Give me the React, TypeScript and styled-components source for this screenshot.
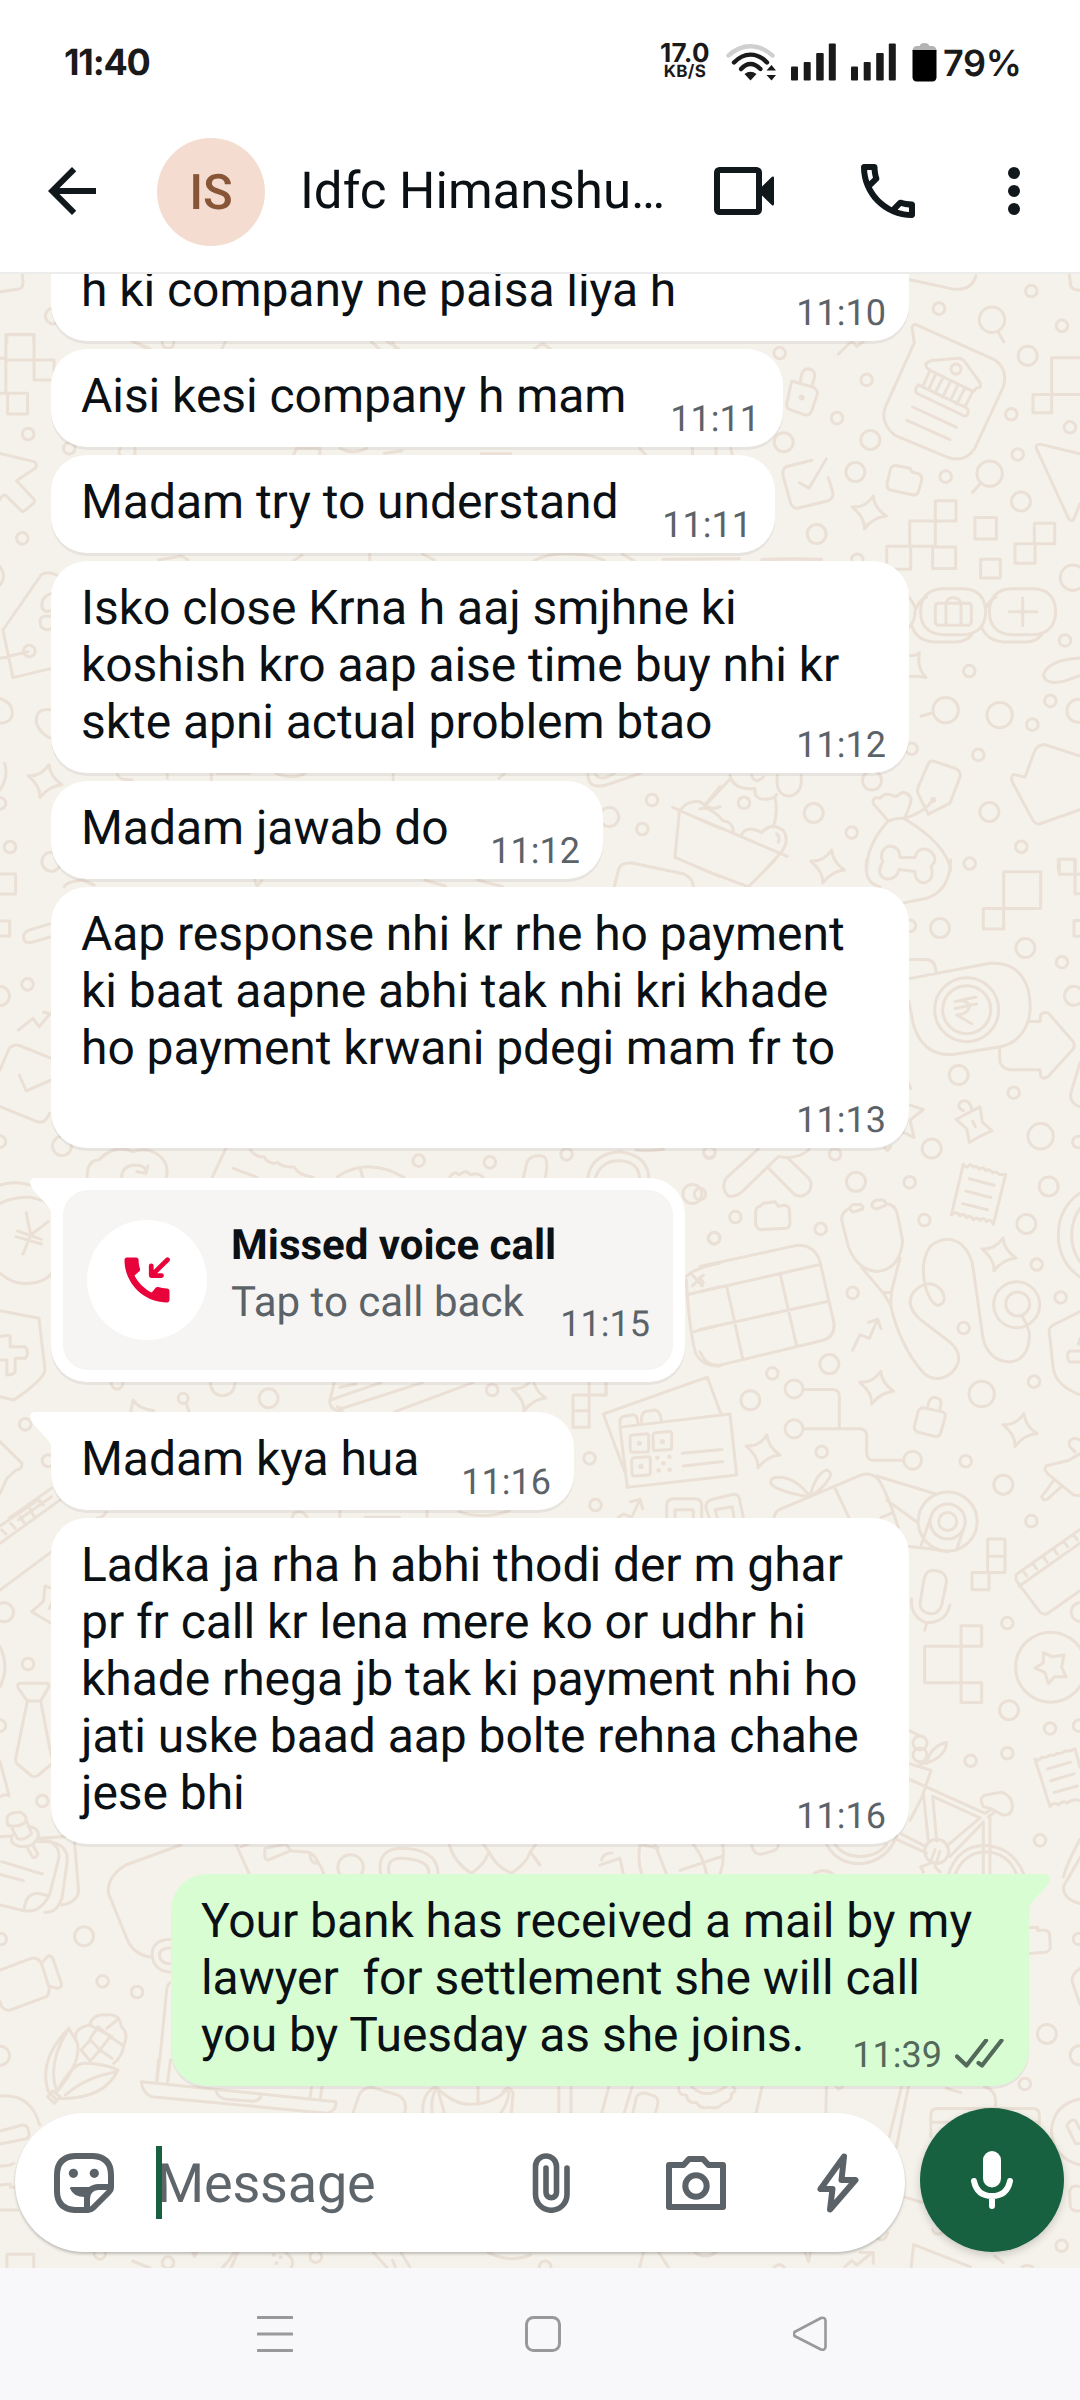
import React from 'react';
import styled, { createGlobalStyle } from 'styled-components';

const GlobalStyle = createGlobalStyle`
  * { box-sizing: border-box; }
  body { margin: 0; background: #fff; font-family: Roboto, "Noto Sans", sans-serif; }
  svg { display: block; flex: none; }
`;

const Screen = styled.div`
  width: 1080px;
  height: 2400px;
  display: flex;
  flex-direction: column;
  overflow: hidden;
  text-rendering: geometricPrecision;
`;

/* ---------- status bar ---------- */

const StatusBar = styled.header`
  height: 110px;
  flex: none;
  display: flex;
  align-items: center;
  padding: 14px 59px 0 64px;
  font-family: Inter, Roboto, sans-serif;
  color: #1a1a1a;
`;

const Clock = styled.span`
  font-size: 36px;
  font-weight: 650;
  line-height: 40px;
  letter-spacing: -1.2px;
  margin-right: auto;
`;

const NetSpeed = styled.div`
  width: 52px;
  display: flex;
  flex-direction: column;
  align-items: center;
  margin-right: 15px;
  white-space: nowrap;
`;

const SpeedValue = styled.span`
  font-size: 26px;
  font-weight: 700;
  line-height: 21px;
  letter-spacing: 0.4px;
`;

const SpeedUnit = styled.span`
  font-size: 17px;
  font-weight: 700;
  line-height: 17px;
  letter-spacing: 0.3px;
`;

const Battery = styled.span`
  font-size: 36px;
  font-weight: 600;
  line-height: 40px;
  letter-spacing: -0.3px;
  width: 77px;
  margin-left: 6px;
  margin-right: 1px;
  padding-top: 2px;
  white-space: nowrap;
`;

/* ---------- app bar ---------- */

const AppBar = styled.div`
  height: 164px;
  flex: none;
  display: flex;
  align-items: center;
  padding: 0 30px 0 36px;
  border-bottom: 2px solid #ececec;
  background: #fff;
  color: #10181c;
`;

const Avatar = styled.div`
  width: 108px;
  height: 108px;
  margin: 2px 35px 0 49px;
  border-radius: 50%;
  background: #f4ddd0;
  color: #885637;
  font-size: 49px;
  font-weight: 500;
  display: flex;
  align-items: center;
  justify-content: center;
  flex: none;
`;

const ContactName = styled.h1`
  flex: 1;
  margin: 0;
  padding-top: 2px;
  font-size: 51px;
  font-weight: 400;
  line-height: 60px;
  color: #0a1014;
  white-space: nowrap;
`;

const HeaderIcon = styled.svg<{ $gap?: number }>`
  margin-right: ${(p) => p.$gap ?? 0}px;
`;

/* ---------- chat ---------- */

const Chat = styled.main`
  position: relative;
  flex: 1;
  min-height: 0;
  display: flex;
  flex-direction: column;
  background: #f5f2eb;
  overflow: hidden;
`;

const Backdrop = styled.svg`
  position: absolute;
  inset: 0;
`;

const Messages = styled.div`
  position: relative;
  flex: 1;
  min-height: 0;
  display: flex;
  flex-direction: column;
  justify-content: flex-end;
  align-items: flex-start;
  padding: 0 51px 22px;
  overflow: hidden;
`;

type BubbleProps = { $w: number; $out?: boolean; $first?: boolean; $clipped?: boolean; $card?: boolean; $roomy?: boolean };

const Bubble = styled.article<BubbleProps>`
  position: relative;
  flex: none;
  display: grid;
  width: ${(p) => p.$w}px;
  margin-top: ${(p) => (p.$first ? 30 : 8)}px;
  align-self: ${(p) => (p.$out ? 'flex-end' : 'flex-start')};
  padding: ${(p) => (p.$card ? '12px' : p.$roomy ? '18px 23px 72px 30px' : '18px 23px 23px 30px')};
  border-radius: ${(p) =>
    p.$clipped ? '0 0 36px 36px' : p.$first ? (p.$out ? '36px 0 36px 36px' : '0 36px 36px 36px') : '36px'};
  background: ${(p) => (p.$out ? '#d8fdd2' : '#fff')};
  box-shadow: 0 3px 0 rgba(11, 20, 26, 0.06);
`;

const Tail = styled.svg<{ $out?: boolean }>`
  position: absolute;
  top: 0;
  ${(p) => (p.$out ? 'right: -21px; transform: scaleX(-1);' : 'left: -21px;')}
  fill: ${(p) => (p.$out ? '#d8fdd2' : '#fff')};
`;

const MessageText = styled.div`
  grid-area: 1 / 1;
  justify-self: start;
  font-size: 48px;
  line-height: 57px;
  letter-spacing: -0.05px;
  color: #0a1014;
  white-space: pre;
`;

const Line = styled.span`
  display: block;
  width: fit-content;
`;

const Meta = styled.div<{ $out?: boolean; $roomy?: boolean }>`
  grid-area: 1 / 1;
  align-self: end;
  justify-self: end;
  display: flex;
  align-items: center;
  gap: 13px;
  height: 36px;
  margin-bottom: ${(p) => (p.$roomy ? -62 : p.$out ? -10 : -13)}px;
  margin-right: ${(p) => (p.$out ? 2 : 0)}px;
  font-size: 36px;
  line-height: 36px;
  color: ${(p) => (p.$out ? '#53695a' : '#5b6368')};
`;

const CallCard = styled.div`
  height: 180px;
  border-radius: 25px;
  background: #f6f5f4;
  display: flex;
  align-items: center;
  padding: 0 23px 0 24px;
`;

const CallBadge = styled.div`
  width: 120px;
  height: 120px;
  border-radius: 50%;
  background: #fff;
  display: flex;
  align-items: center;
  justify-content: center;
  margin-right: 24px;
`;

const CallText = styled.div`
  flex: 1;
  display: flex;
  flex-direction: column;
  padding-bottom: 12px;
  white-space: nowrap;
  font-size: 42px;
  line-height: 57px;
  color: #5b6368;
`;

const CallTitle = styled.strong`
  font-weight: 700;
  color: #0a1014;
`;

const CallTime = styled.span`
  align-self: flex-end;
  margin-bottom: 28px;
  font-size: 36px;
  line-height: 36px;
  color: #5b6368;
`;

/* ---------- composer ---------- */

const Composer = styled.footer`
  position: relative;
  flex: none;
  display: flex;
  align-items: flex-end;
  gap: 15px;
  padding: 0 16px 16px 15px;
`;

const InputPill = styled.div`
  width: 890px;
  height: 139px;
  border-radius: 70px;
  background: #fff;
  box-shadow: 0 2px 3px rgba(0, 0, 0, 0.22);
  display: flex;
  align-items: center;
  padding: 0 46px 0 39px;
  color: #5b6368;
`;

const Placeholder = styled.div`
  position: relative;
  flex: 1;
  height: 73px;
  margin-left: 42px;
  padding-left: 1px;
  font-size: 54px;
  line-height: 78px;
  letter-spacing: -0.2px;
  color: #5e666b;
`;

const Caret = styled.span`
  position: absolute;
  left: 0;
  top: 0;
  width: 6px;
  height: 73px;
  background: #176040;
`;

const InputIcon = styled.svg<{ $gap?: number }>`
  margin-left: ${(p) => p.$gap ?? 0}px;
`;

const MicButton = styled.button`
  width: 144px;
  height: 144px;
  border: 0;
  padding: 0;
  border-radius: 50%;
  background: #176040;
  box-shadow: 0 3px 8px rgba(0, 0, 0, 0.18);
  display: flex;
  align-items: center;
  justify-content: center;
`;

const NavBar = styled.nav`
  height: 132px;
  flex: none;
  display: flex;
  align-items: center;
  gap: 232px;
  padding-left: 257px;
  background: #f8f8fb;
`;

/* ---------- wallpaper ---------- */

type Dot = [number, number, number?];
type PatchData = { x: number; y: number; sx: number; sy: number; d: string; dots?: Dot[]; sparks?: Dot[]; specks?: Dot[] };

const PATCHES: PatchData[] = [
  {
    x: 0, y: 0, sx: 2.904, sy: 3,
    d: 'M65 825L67 850Q65 868 50 868L0 875M20 1025V1003H98V1025M385 1025L435 1045M1078 1025L1100 1045M1140 1025L1148 1042M645 1045L655 1025',
    dots: [[155, 948, 8], [488, 1028]],
  },
  {
    x: 700, y: 270, sx: 3, sy: 2.613,
    d: 'M648 143L885 235Q925 260 910 305L825 465Q795 505 745 490L585 432Q540 400 555 360L643 190L636 150Q640 140 648 143Z M678 245Q690 235 705 236L765 231Q785 228 795 240L838 292Q848 310 830 308L820 318L690 262Q675 255 678 245M690 262L668 305M708 270L685 313M730 280L705 322M752 290L728 332M774 300L752 340M796 306L770 350M820 315L795 357M655 300L800 360Q808 368 802 378Q795 385 785 378L650 322Q642 310 655 300ZM638 358L770 411M621 393L750 443M275 290L338 306Q355 312 352 325L335 368Q328 382 312 378L268 364Q255 358 262 342ZM302 290Q303 258 325 258Q350 262 342 285L336 303M893 160L912 188M843 556L818 581M698 1157L663 1166M1140 229H1055V325H1140M1055 325V373H999V325H1055M335 497L258 514Q245 520 250 540L272 610Q280 625 295 622L385 603Q402 595 398 580L385 543M298 556L327 570L379 493M572 518Q580 508 595 512L630 518L636 528L655 532Q668 538 665 550L655 580Q650 590 640 588L570 575Q558 570 562 555ZM706 603H768V656H706ZM629 656H706V722H629ZM560 722H632V782H560ZM698 724H767V780H698ZM825 647H889V703H825ZM1003 662H1064V715H1003ZM945 715H1005V766H945ZM842 756H901V805H842ZM1140 480L1020 455Q1005 455 1010 468L1105 648Q1115 662 1123 648L1140 610M730 833H790Q855 835 857 893Q855 950 790 953H730Q662 950 662 893Q662 835 730 833ZM715 871H805Q814 871 814 880V918Q814 928 805 928H715Q706 928 706 918V880Q706 871 715 871ZM738 928V875Q740 856 760 856Q782 858 783 875V928M627 855Q650 880 645 893Q645 920 627 933M637 933Q650 968 700 972H770Q800 970 815 953M680 855Q660 860 648 885M935 833H1000Q1065 835 1067 893Q1065 950 1000 953H935Q870 950 868 893Q870 835 935 833ZM968 857V929M928 893H1010M845 933Q860 968 910 972H980Q1010 970 1025 953M888 855Q865 865 857 885M1140 1014Q1040 1020 1030 1060Q1040 1085 1090 1075L1140 1060M627 1008Q650 1008 658 1000Q650 1040 678 1065Q650 1060 627 1062M702 1284L765 1302Q785 1310 780 1325L750 1393L685 1422L655 1370Q650 1360 655 1350L685 1290Q690 1280 702 1284ZM700 1384Q670 1420 612 1433M565 1440L520 1395Q515 1375 540 1380Q555 1365 575 1372Q590 1380 600 1368Q620 1360 633 1380Q635 1395 612 1433Q590 1430 565 1440Q500 1500 500 1568M612 1433Q740 1500 752 1568M600 1535H645Q650 1510 680 1513Q710 1525 703 1548M600 1535Q600 1505 565 1505Q535 1520 548 1545M15 1400L90 1330M220 1455Q235 1420 225 1378M90 1320Q100 1360 165 1355Q160 1385 200 1383Q225 1380 230 1370M155 1320Q165 1345 190 1325M232 1320Q225 1370 265 1375Q310 1370 303 1320M0 1408Q30 1400 70 1440Q95 1440 100 1465M125 1475Q140 1450 185 1470Q215 1440 250 1465Q270 1490 245 1520M0 1435L262 1532M195 1568L245 1520M230 1473Q242 1482 235 1495M1140 1270L1035 1240Q1015 1240 1005 1255L975 1325L940 1318Q930 1325 938 1340L1000 1440Q1010 1450 1020 1447L1140 1410M415 220L455 186L470 200L490 187M627 25L760 50Q815 55 828 15M1108 12L1112 40Q1115 53 1140 53M185 757Q280 752 365 757M1075 1568V1540H1125V1568',
    dots: [[994, 55], [717, 101], [1086, 146], [500, 287], [411, 387], [934, 377], [1110, 411], [953, 482], [239, 217], [737, 540], [472, 757], [1095, 968], [808, 1048], [1051, 1126], [997, 1188], [635, 1251], [835, 1267], [132, 1392], [455, 1470], [964, 1507], [809, 1551], [768, 259, 5], [983, 224, 9.5], [511, 444, 9.5], [466, 528, 9.5], [963, 605, 9.5], [350, 690, 9.5], [251, 450, 9.5], [516, 1334, 9.5], [341, 1419, 9.5], [868, 1416, 9.5], [876, 130, 12.7], [869, 532, 12.7], [1119, 804, 12.7], [737, 1150, 12.7], [899, 1163, 12.7], [1135, 1152, 11.5]],
    sparks: [[508, 635], [383, 1560]],
    specks: [[305, 333, 3], [700, 1384, 3]],
  },
  {
    x: 700, y: 860, sx: 3, sy: 2.613,
    d: 'M500 0Q490 60 540 70M752 0Q750 80 680 100L610 112M548 5Q525 40 560 50Q590 50 597 25L645 30Q645 60 675 60Q705 50 693 18L703 5M911 31H1022V127H911ZM850 127H911V180H850ZM1078 0V37H1125V88H1140M1125 0V37H1140M1140 158H1122V199H1140M0 22L145 70L225 0M627 310L870 270Q960 265 985 340Q1000 400 975 440Q950 480 900 488L760 508Q670 515 640 430L627 370M627 260H680Q708 262 708 295M765 370L828 358M765 388L830 376M780 368Q810 370 808 385Q800 405 770 405L815 428M988 422H1020L1022 405Q1030 395 1045 400L1120 475Q1125 485 1120 493L1045 565Q1030 575 1022 565L1020 548H930Q900 545 899 520V490M768 678L800 663L840 645L847 685L876 707L840 722L808 738L800 702ZM790 655Q765 645 785 630Q810 625 815 652M818 683L826 697M627 640L670 652L630 680L642 725L610 712M555 753L562 760L572 750M627 585L632 597M790 795Q797 806 805 800Q812 792 820 803Q830 797 838 808Q848 800 858 812Q868 805 878 817Q888 812 898 822L917 822L880 952Q870 935 860 945Q850 930 840 942Q830 930 820 940Q810 925 800 935Q790 920 780 930Q770 915 754 927ZM808 833L882 850M798 865L872 882M788 898L862 914M175 755L80 830Q60 855 85 878Q105 882 125 868L235 775L262 778Q310 775 328 755M205 805L285 875Q310 885 328 865Q340 845 325 830L262 778M180 905L190 897L225 893L235 905L255 902Q268 905 268 915L270 950Q268 962 258 962L180 966Q167 960 167 950V920Q168 907 180 905ZM0 1062L290 1007Q345 1005 360 1050L402 1210Q405 1245 370 1255L60 1320Q20 1325 0 1285M0 1128L360 1057M0 1227L385 1153M80 1113L128 1303M240 1080L290 1270M0 1090L10 1105M447 910Q420 925 426 945L445 1010Q470 1070 530 1075Q600 1070 608 995L592 925Q585 900 560 898M460 900L480 900Q492 905 488 912L460 920Q445 915 452 905ZM525 890L548 888Q560 893 555 903L530 912Q512 910 517 897ZM485 1065L553 1135L572 1165Q600 1270 670 1340Q710 1370 755 1340Q800 1300 750 1260L660 1200Q610 1160 645 1125Q690 1090 725 1125Q745 1155 715 1164Q690 1160 675 1110Q660 1050 690 1010Q740 975 785 1005Q815 1030 820 1070L850 1255Q870 1310 930 1312Q990 1305 988 1235Q980 1210 965 1190M600 1040L575 1125L572 1165M553 1130H575M458 1281L480 1240L508 1250L533 1200M505 1208L533 1200L543 1225M1140 870Q1075 910 1075 980Q1075 1050 1140 1090M1140 910Q1115 940 1115 980Q1115 1020 1140 1050M1140 530L1112 610Q1108 635 1140 645M1140 1180L1060 1215Q1045 1222 1048 1235L1060 1330Q1070 1375 1140 1397M1140 1283H1110Q1103 1285 1103 1297Q1103 1312 1112 1312H1140M1140 1250L1135 1265',
    dots: [[1086, 267], [941, 608], [629, 842], [405, 769], [28, 765], [106, 933], [43, 988], [362, 964], [673, 941], [458, 1131], [1010, 1057], [1082, 1143], [791, 1223], [1135, 737], [630, 172], [0, 873], [720, 178, 9.5], [976, 230, 9.5], [776, 562, 9.5], [695, 754, 9.5], [468, 841, 9.5], [1046, 853, 9.5], [979, 951, 9.5], [1022, 722, 12.7], [1122, 355, 9.5], [800, 391, 32], [800, 391, 24], [950, 1162, 23], [953, 1160, 12]],
    sparks: [[897, 1032]],
  },
  {
    x: 600, y: 1340, sx: 3, sy: 2.904,
    d: 'M611 144H700Q718 145 718 165V258M611 258H780Q800 260 800 278V330Q803 350 820 349H909M965 196L1025 208Q1038 212 1036 222L1022 270Q1018 282 1005 280L955 268Q940 262 943 250L955 205ZM983 197Q985 168 1003 166Q1028 170 1022 190L1018 207M75 385L10 215L322 108L362 213M60 253L390 215L410 392L82 428ZM60 245Q58 225 70 222L100 217Q112 218 114 242M125 238Q122 215 135 208L165 203Q180 205 184 232M98 276L140 272Q146 272 146 278V318Q146 325 140 325L98 326Q91 326 91 320L90 282Q90 276 98 276ZM166 269L208 266Q215 266 215 272V312Q215 318 209 318L168 321Q160 321 160 314L159 275Q160 270 166 269ZM102 342L144 339Q151 339 151 345V385Q151 392 145 392L104 395Q97 395 96 388L95 348Q96 343 102 342ZM247 329L366 318M250 366L369 353M200 516V480Q200 462 220 461H285Q305 463 305 480V516M225 516V493H280V516M328 516L318 490Q315 470 335 463L400 448Q415 448 418 460L430 516M352 516L345 493L397 484L402 516M55 515L70 505L95 515L120 462M92 470L120 462L128 490M522 516Q525 495 545 490L775 395Q810 380 835 405Q860 440 895 545M705 430L747 516M830 395L1010 448M860 465L953 530M630 455Q580 390 520 400Q500 415 530 430Q580 450 630 455Q645 390 680 377Q700 385 685 405Q670 430 630 455M843 516L875 503M990 520L962 600M1090 550L1070 610M1045 615Q990 605 927 600M1440 330L1405 350L1340 365Q1328 375 1345 390L1420 450L1440 452M1410 310Q1400 290 1425 285L1440 290M1360 410L1325 455Q1330 470 1345 460L1385 425M1410 310L1425 325M1163 578H1215V675H1163ZM1163 628H1215M1116 675H1167V725H1116ZM1083 830H1145V889H1083ZM1083 889V995M974 889H1083M974 889V995H1145V1053H1083V995M1440 550L1250 680Q1245 690 1250 700L1320 790Q1332 800 1345 793L1440 728M1257 715L1440 590M1270 672L1280 685M1300 650L1310 665M1330 630L1341 645M1362 608L1372 622M1392 586L1403 600M1420 566L1432 580M985 672Q1005 665 1025 675Q1043 685 1038 710L1025 770Q1015 797 990 795Q960 790 960 765L972 695Q975 680 985 672ZM935 752Q930 800 975 820Q1035 825 1050 770M980 822L974 843M1330 908L1357 920L1392 915L1385 950L1398 978L1363 978L1345 998L1335 965L1305 953L1330 937ZM1305 1217Q1315 1225 1325 1212Q1340 1215 1350 1205Q1362 1210 1372 1200Q1385 1203 1395 1193Q1408 1197 1425 1187L1440 1240M1305 1217L1350 1355Q1362 1340 1375 1350Q1390 1335 1402 1345Q1420 1330 1440 1338M1342 1246L1412 1226M1352 1280L1422 1260M1362 1314L1432 1295M927 1275L1155 1375M970 1315L985 1455M998 1325L1010 1455M998 1325L1140 1388L1040 1470M1155 1375L1175 1362M1165 1385L1185 1370M1150 1355Q1135 1330 1155 1322L1205 1313Q1240 1325 1237 1360Q1230 1385 1205 1378L1175 1362L1150 1355M1150 1400V1550M1170 1385V1550M1150 1400L1050 1500M890 1450L980 1490M905 1435L975 1470M1045 1552Q1075 1465 1160 1468Q1240 1475 1272 1552M1065 1552Q1095 1485 1160 1487Q1225 1490 1250 1552M680 1465Q710 1520 780 1521Q860 1515 890 1440M705 1465Q730 1500 780 1500Q830 1500 860 1465M927 1230L993 1250L965 1330L930 1395M980 1230Q990 1180 1040 1168Q1035 1220 960 1232M930 1135L960 1150M1005 1480L990 1520L962 1530L970 1545M1020 1485L1005 1530L1020 1545M120 1465Q112 1510 125 1552M368 1465Q375 1510 360 1552M165 1465L200 1552M280 1465Q310 1500 320 1552M120 1465L175 1475M240 1540L365 1500M455 1465Q460 1495 485 1493L515 1485Q535 1480 535 1465M640 1552Q670 1530 700 1552M0 1525L60 1505L70 1552M5 1510Q10 1490 35 1490M1440 1450Q1400 1520 1390 1560M0 160H18V122',
    dots: [[517, 97], [665, 325], [1302, 121], [1097, 352], [1294, 526], [1222, 822], [1350, 1128], [1222, 1200], [1112, 1222], [1320, 1453], [1437, 1120], [688, 70, 9.5], [451, 175, 9.5], [582, 142, 9], [582, 258, 9], [938, 349, 9], [1210, 420, 9.5], [1227, 1075, 9.5], [1442, 790, 9.5], [1145, 157, 12.7], [1043, 527, 29.5], [1043, 527, 17.5], [1043, 527, 9], [1352, 950, 35], [960, 1170, 7], [960, 1205, 7], [1010, 1485, 12]],
    sparks: [[830, 140], [489, 325], [1260, 263]],
    specks: [[118, 300, 2.6], [187, 295, 2.6], [123, 367, 2.6], [172, 342, 2.2], [208, 339, 2.2], [190, 358, 2.2], [176, 379, 2.2], [209, 377, 2.2]],
  },
  {
    x: 540, y: 1840, sx: 2.904, sy: 2.8,
    d: 'M1420 245L1445 245V253H1465Q1482 255 1480 270L1482 300Q1480 316 1460 315L1420 318M1568 50L1520 130Q1518 165 1568 178M1568 360Q1535 380 1550 410L1568 460M1135 830V770Q1135 752 1155 752H1430Q1450 752 1450 770V810M1135 790H1200M1425 790H1450M1180 695L1222 707M1290 690Q1330 700 1322 750M403 690Q400 715 425 715Q430 740 455 735Q465 755 490 748Q520 755 530 738Q560 730 555 712Q575 700 560 690M440 690Q480 730 540 690M55 690V762M90 690V762M200 690L180 762M268 690L245 762M270 762L280 720Q290 705 310 710L335 718Q350 730 335 762M645 690L628 762M832 690L830 762M1050 690L1015 830M1070 690L1035 860M860 690L867 698L880 690M1568 725Q1490 740 1485 815Q1490 890 1568 910M1530 800Q1540 780 1555 785L1568 810M1530 800L1555 850H1568M1568 970Q1540 965 1538 985L1540 1025Q1545 1042 1568 1038M1060 1000L1110 1015M1140 1090Q1145 1110 1170 1100M980 1115Q1000 1130 1010 1100M1085 1133L1078 1195M1085 1133L1250 1195M1320 1165L1345 1183M885 1195L905 1178L920 1190L965 1155M930 1155H968V1185M770 1155L780 1180L785 1155M290 1195L300 1155M345 1155L372 1195M450 1155Q480 1175 510 1155M680 1197Q695 1180 710 1197M1400 1195Q1415 1188 1430 1195',
    dots: [[1408, 683], [1515, 1136], [1565, 277], [15, 1195], [1472, 543, 9.5], [1567, 603, 9.5]],
  },
  {
    x: 0, y: 2060, sx: 2.904, sy: 3,
    d: 'M20 624V583H98V624M385 603L435 624M645 624L665 600Q670 590 680 578M670 624L690 578M830 578Q860 600 845 624M1085 578L1125 624M1165 578L1190 620M1140 600L1148 620M1418 578Q1480 610 1540 585M560 578L565 590L570 578M0 108Q90 100 115 195M0 213L65 195Q80 195 82 210L85 225Q82 235 70 238L0 252M0 318Q25 320 40 310M0 375L30 372V382H45M0 450H50M410 65L975 125Q980 150 950 160L440 110Q415 100 410 65ZM628 95Q635 115 660 118L735 124Q755 120 758 108M455 65L460 0M487 65L495 0M900 115L905 80M930 118L935 80M1025 158L1045 100Q1065 75 1090 85L1155 105Q1185 120 1175 158M1228 158Q1225 100 1265 80M1255 158Q1250 110 1270 80M1270 85Q1320 135 1370 133Q1440 130 1475 85M1388 80V133M1460 95Q1480 70 1490 100L1485 158M1290 158Q1280 120 1270 85M1455 158Q1475 130 1478 95',
    dots: [[488, 608], [290, 580], [917, 590]],
    specks: [[795, 585, 2], [815, 592, 2], [803, 609, 2]],
  },
  {
    x: 0, y: 1780, sx: 2.904, sy: 3,
    d: 'M200 745Q110 840 140 935L165 960M200 745Q135 850 165 935M165 935Q210 850 245 850Q300 850 343 870Q300 960 170 955M200 745L225 790Q235 850 165 935M340 875Q250 890 190 945M138 950L152 933L175 950L158 970ZM220 775Q215 745 260 735Q270 700 310 705Q350 700 352 740Q375 760 360 795Q355 830 330 850M235 810L262 780L290 810L262 843ZM262 775L285 740L320 770L290 810M310 745L340 720M320 770L355 795M262 735L285 750M290 810L325 835M260 735L325 770M0 570L90 535Q110 530 120 550L142 620Q145 640 135 650L30 690Q15 693 5 680L0 665M120 550L140 528Q150 525 155 540L178 610Q180 625 165 625L142 618M525 195L365 255Q310 290 315 340L370 480Q390 525 440 532M495 478Q440 480 442 525Q445 572 495 577M495 503Q462 505 463 527Q465 550 495 552M495 608Q485 610 483 640L465 830L455 905M20 115Q25 95 60 97Q85 110 70 130Q45 145 22 135ZM35 145L50 175Q70 185 92 160L78 125M82 140Q110 140 112 165Q105 200 65 200Q25 195 35 165M80 205L95 232Q105 235 110 222L95 195M0 170L35 168M110 175Q170 180 172 230L145 340Q120 400 70 392L0 375M110 185Q200 180 195 245L180 355Q165 400 130 397M115 175L215 168L228 330Q228 365 180 375M5 245L123 282M0 283L68 302M70 388Q75 340 110 340L143 348M685 192L723 280M700 200L720 192M770 205L830 192L845 212L778 240Q765 240 770 205ZM845 212L895 217Q915 220 940 280M900 220Q900 250 920 250M1105 280Q1095 210 1160 205Q1270 205 1272 280M1130 280Q1120 235 1165 235Q1250 240 1245 280M1305 195Q1320 250 1370 280Q1410 250 1420 215L1405 195M1420 215Q1440 260 1485 280Q1530 250 1540 215L1555 195M1540 215L1568 255',
    dots: [[298, 604], [398, 636], [2, 477], [244, 469, 9.5], [0, 827, 9.5], [1018, 262, 12.7]],
  },
  {
    x: 0, y: 330, sx: 1.704, sy: 3,
    d: 'M10 14H58V90H10ZM58 90H92V150H58ZM10 90V190M0 85H10M0 190H47V252H13V190M0 370L58 395Q65 405 60 415L28 452L58 508Q60 515 57 520L42 542Q38 548 35 540L10 497Q5 490 0 508M0 710Q12 740 0 765M100 738Q80 720 70 735L5 900L22 1043L88 1015M88 790Q68 800 72 835Q78 850 88 840M88 860Q62 850 70 890Q78 905 88 895M48 965L0 985M0 1105Q25 1120 20 1160Q15 1180 0 1180M88 1140Q60 1130 62 1180Q70 1215 88 1225M8 1300Q15 1340 0 1380M235 40L250 57M660 35L680 57M910 57L925 40L938 57M205 355Q200 370 205 375M230 355V375M500 375L505 355H545V375M580 355Q600 375 625 355M655 370L685 362M820 371H870M1090 355L1100 375M1180 355V375M1220 355V375M1245 355L1248 375M270 690L310 678L320 690M500 692L515 675M630 672V692M720 672L740 690M910 692Q940 665 980 672Q1010 675 1030 692M1060 672L1080 692M1130 688L1260 686M1300 688H1400M200 1330Q200 1350 225 1350M285 1330V1345M360 1350V1330M370 1330H425M470 1330Q500 1350 520 1330M670 1350V1330M850 1345L860 1330',
    dots: [[48, 312], [38, 625], [118, 355], [50, 963]],
  },
  {
    x: 0, y: 770, sx: 2.178, sy: 3,
    d: 'M0 312H34V372H0M0 453H21V498H0M112 460L60 482Q45 495 55 515Q62 520 75 515L112 500M40 780L72 745L85 770L110 730M95 727L112 732M0 900L20 835Q30 820 45 828L112 865M42 915L57 963L112 930M0 1010L85 1057Q100 1058 108 1030M1465 112L1568 175M1480 120L1470 262L1568 320M1485 115Q1500 90 1525 95L1540 110Q1555 120 1568 110M1535 105L1568 50M1338 350L1348 295Q1355 275 1380 280L1490 312Q1510 325 1510 350M140 350Q145 335 180 330L205 345M555 330L560 350L570 332M925 330L970 348M1040 330L1095 350M1280 8Q1280 60 1320 45L1395 10M1295 8Q1305 40 1340 8',
    dots: [[22, 231], [60, 643], [1420, 90], [1399, 177], [0, 100], [0, 1115], [0, 678, 9.5], [112, 275, 9.5], [1327, 141, 9.5]],
    sparks: [[98, 35]],
  },
  {
    x: 0, y: 1140, sx: 2.178, sy: 3,
    d: 'M190 110Q190 60 215 60Q250 10 290 35Q320 20 345 45Q370 70 362 112M265 112Q265 80 290 75Q320 75 318 100L298 95M318 100L322 78M492 25L462 112M545 30Q560 55 575 50Q585 75 605 68Q620 85 640 80Q650 105 682 112M508 85L560 112M735 110Q800 50 880 112M785 88L790 112M980 110Q990 90 1000 105Q1015 85 1025 105Q1040 95 1052 112M1140 112L1148 65Q1160 40 1185 50Q1195 60 1188 112M1280 112Q1290 40 1350 35Q1410 45 1413 112M1297 112Q1310 60 1350 62Q1390 65 1393 112M1385 30Q1410 35 1445 28M0 135Q40 120 75 140M0 190Q30 170 65 172Q100 180 112 200M0 400Q30 435 65 430Q100 425 112 400M57 218L67 285L105 245M67 285L50 342M35 290L90 312M38 273L90 298M0 512L85 535L98 690Q95 720 30 780L0 770M0 590Q10 585 22 587V620H55Q65 640 55 655H33V695Q30 705 15 705V660H0M1495 410Q1510 385 1568 370M1495 465L1568 440M1512 575L1568 555M1495 420Q1500 560 1515 640Q1530 680 1568 678M1508 405L1530 438M1532 405L1508 438M458 728Q460 765 485 767Q510 765 512 728M405 788L412 815M285 815L290 780Q300 805 335 812M728 728L718 785Q720 815 745 812M735 800Q740 808 750 803L920 728M720 780L740 770L830 728M740 742L775 732M860 815L1030 728M1283 728V765H1320V728M1248 765H1283V862H1248ZM1248 812H1283M0 905L48 970Q48 990 35 990L15 1015L0 1060M20 1135L112 1045M40 1140L112 1070M60 1100L68 1110M85 1080L92 1090M635 1135L640 1120Q660 1105 670 1135M740 1112V1132M795 1132H870M930 1112V1132M1000 1115Q1050 1140 1110 1112',
    dots: [[912, 62], [1067, 67], [1234, 43], [1072, 750], [399, 775, 5], [255, 730], [1297, 1095], [1555, 295], [55, 853], [1284, 955], [1545, 35], [135, 18, 9.5], [585, 775, 9.5], [1508, 162, 9.5], [105, 962, 6]],
    sparks: [[1152, 765]],
  },
  {
    x: 0, y: 1500, sx: 3, sy: 3,
    d: 'M0 78L115 0M0 130L180 0M0 270L155 155M5 90L18 102M32 70L45 85M60 50L72 68M90 32L102 48M118 5L130 15M290 55Q305 55 318 37M155 265L135 258L130 305L95 335L153 370M155 310L148 325M0 440Q30 500 0 560M58 550H142Q150 555 145 563L122 603H82L55 565Q50 552 58 550ZM82 603L47 775Q45 785 52 792L95 828Q103 832 112 828L155 792M122 603L155 775M0 785L27 885M0 890Q15 880 27 887',
    dots: [[12, 337, 9.5], [84, 492], [0, 677], [127, 903]],
  },
];

const SPARK = 'M4 -17Q5 -5 17 3Q4 4 -5 16Q-4 5 -17 -6Q-4 -5 4 -17Z';
const DOODLE = '#eae0d5';

function Wallpaper() {
  return (
    <Backdrop width={1080} height={1994} viewBox="0 274 1080 1994" fill="none" stroke={DOODLE} strokeWidth={3} strokeLinejoin="round" strokeLinecap="round">
      {PATCHES.map((p, i) => (
        <g key={i}>
          <path d={p.d} transform={`translate(${p.x} ${p.y}) scale(${1 / p.sx} ${1 / p.sy})`} vectorEffect="non-scaling-stroke" />
          {p.dots?.map(([x, y, r = 5.8], j) => (
            <circle key={j} cx={p.x + x / p.sx} cy={p.y + y / p.sy} r={r} />
          ))}
          {p.specks?.map(([x, y, r], j) => (
            <circle key={j} cx={p.x + x / p.sx} cy={p.y + y / p.sy} r={r} fill={DOODLE} stroke="none" />
          ))}
          {p.sparks?.map(([x, y], j) => (
            <path key={j} d={SPARK} transform={`translate(${p.x + x / p.sx} ${p.y + y / p.sy})`} />
          ))}
        </g>
      ))}
    </Backdrop>
  );
}

/* ---------- icons ---------- */

const SignalBars = ({ gap }: { gap: number }) => (
  <HeaderIcon $gap={gap} width={45} height={38} viewBox="0 0 45 38" fill="#1a1a1a">
    <rect x={0} y={23.5} width={7} height={14} rx={1} />
    <rect x={12.7} y={19} width={7} height={18.5} rx={1} />
    <rect x={25.2} y={10} width={7.5} height={27.5} rx={1} />
    <rect x={37.8} y={0.5} width={7} height={37} rx={1} />
  </HeaderIcon>
);

const WifiIcon = () => (
  <HeaderIcon $gap={15} width={50} height={38} viewBox="0 0 50 38" fill="none" strokeWidth={4.4} strokeLinecap="round">
    <path d="M2.5 12.5Q12.5 3.2 24.5 3.2T46.5 12.5" stroke="#cfcfcf" />
    <path d="M8 19.5Q15.5 11.6 24.5 11.6T41 19.5" stroke="#1a1a1a" />
    <path d="M15 26Q19.5 21 24.5 21T34.5 26" stroke="#1a1a1a" />
    <path d="M18.5 31Q24.5 26.5 30.5 31L24.5 37.5Z" fill="#1a1a1a" />
    <path d="M40.5 27.5L45.5 22L50 27.5ZM40.5 32L45.5 37.5L50 32Z" fill="#1a1a1a" />
  </HeaderIcon>
);

const BubbleTail = ({ out }: { out?: boolean }) => (
  <Tail $out={out} width={22} height={36} viewBox="0 0 22 36">
    <path d="M22 0H5Q-2 1 1 8Q2 11 5 14L17 27Q21 31 22 36Z" />
  </Tail>
);

const DoubleCheck = () => (
  <svg width={49} height={32} viewBox="0 0 49 32" fill="none" stroke="#53695a" strokeWidth={4.2} strokeLinecap="round" strokeLinejoin="round">
    <path d="M2 17.5L11.5 26.5L31 1.500M23.5 24L27 26.5L46.5 1.500" />
  </svg>
);

/* ---------- content ---------- */

type Message = { text: string; time: string; w: number; first?: boolean; clipped?: boolean; roomy?: boolean; out?: boolean };

const BEFORE_CALL: Message[] = [
  { text: 'h ki company ne paisa liya h', time: '11:10', w: 858, clipped: true },
  { text: 'Aisi kesi company h mam', time: '11:11', w: 732 },
  { text: 'Madam try to understand', time: '11:11', w: 724 },
  { text: 'Isko close Krna h aaj smjhne ki\nkoshish kro aap aise time buy nhi kr\nskte apni actual problem btao', time: '11:12', w: 858 },
  { text: 'Madam jawab do', time: '11:12', w: 552 },
  { text: 'Aap response nhi kr rhe ho payment\nki baat aapne abhi tak nhi kri khade\nho payment krwani pdegi mam fr to', time: '11:13', w: 858, roomy: true },
];

const AFTER_CALL: Message[] = [
  { text: 'Madam kya hua', time: '11:16', w: 523, first: true },
  { text: 'Ladka ja rha h abhi thodi der m ghar\npr fr call kr lena mere ko or udhr hi\nkhade rhega jb tak ki payment nhi ho\njati uske baad aap bolte rehna chahe\njese bhi', time: '11:16', w: 858 },
  { text: 'Your bank has received a mail by my\nlawyer  for settlement she will call\nyou by Tuesday as she joins.', time: '11:39', w: 858, first: true, out: true },
];

function MessageBubble({ m }: { m: Message }) {
  return (
    <Bubble $w={m.w} $first={m.first} $clipped={m.clipped} $roomy={m.roomy} $out={m.out}>
      {m.first && <BubbleTail out={m.out} />}
      <MessageText>
        {m.text.split('\n').map((line) => (
          <Line key={line}>{line}</Line>
        ))}
      </MessageText>
      <Meta $out={m.out} $roomy={m.roomy}>
        {m.time}
        {m.out && <DoubleCheck />}
      </Meta>
    </Bubble>
  );
}

export default function App() {
  return (
    <Screen>
      <GlobalStyle />
      <StatusBar>
        <Clock>11:40</Clock>
        <NetSpeed>
          <SpeedValue>17.0</SpeedValue>
          <SpeedUnit>KB/S</SpeedUnit>
        </NetSpeed>
        <WifiIcon />
        <SignalBars gap={15} />
        <SignalBars gap={16} />
        <svg width={25} height={39} viewBox="0 0 25 39">
          <path d="M4 3H7.5Q8.5 0 12.5 0T17.5 3H21Q24.5 4 24.5 8H0.5Q0.5 4 4 3Z" fill="#b3b3b3" />
          <path d="M0.5 7H24.5V34.5Q24 38.5 20.5 38.5H4.5Q1 38.5 0.5 34.5Z" fill="#000" />
        </svg>
        <Battery>79%</Battery>
      </StatusBar>

      <AppBar>
        <svg width={72} height={72} viewBox="0 0 24 24" fill="currentColor">
          <path d="M20 11H7.83l5.59-5.59L12 4l-8 8 8 8 1.41-1.41L7.83 13H20v-2z" />
        </svg>
        <Avatar>IS</Avatar>
        <ContactName>Idfc Himanshu…</ContactName>
        <HeaderIcon $gap={78} width={60} height={48} viewBox="0 0 60 48">
          <rect x={3} y={3} width={42} height={42} rx={2.5} fill="none" stroke="currentColor" strokeWidth={6} />
          <path d="M47 20.5L58 9.8Q60 9 60 11V37Q60 39 58 38.2L47 27.5Z" fill="currentColor" />
        </HeaderIcon>
        <HeaderIcon $gap={54} width={72} height={72} viewBox="0 0 24 24" fill="currentColor">
          <path d="M6.54 5c.06.89.21 1.76.45 2.59l-1.2 1.2c-.41-1.2-.67-2.47-.76-3.79h1.51m9.86 12.02c.85.24 1.72.39 2.6.45v1.49c-1.32-.09-2.59-.35-3.8-.75l1.2-1.19M7.5 3H4c-.55 0-1 .45-1 1 0 9.39 7.61 17 17 17 .55 0 1-.45 1-1v-3.49c0-.55-.45-1-1-1-1.24 0-2.45-.2-3.57-.57-.1-.04-.21-.05-.31-.05-.26 0-.51.1-.71.29l-2.2 2.2c-2.83-1.45-5.15-3.76-6.59-6.59l2.2-2.2c.28-.28.36-.67.25-1.02C8.7 6.45 8.5 5.25 8.5 4c0-.55-.45-1-1-1z" />
        </HeaderIcon>
        <svg width={72} height={72} viewBox="0 0 24 24" fill="currentColor">
          <circle cx={12} cy={6} r={2} />
          <circle cx={12} cy={12} r={2} />
          <circle cx={12} cy={18} r={2} />
        </svg>
      </AppBar>

      <Chat>
        <Wallpaper />
        <Messages>
          {BEFORE_CALL.map((m) => (
            <MessageBubble key={m.text} m={m} />
          ))}
          <Bubble $w={634} $first $card>
            <BubbleTail />
            <CallCard>
              <CallBadge>
                <svg width={60} height={60} viewBox="0 0 24 24">
                  <path
                    fill="#e9033b"
                    d="M20.01 15.38c-1.23 0-2.42-.2-3.53-.56-.35-.12-.74-.03-1.01.24l-1.57 1.97c-2.83-1.35-5.48-3.9-6.89-6.83l1.95-1.66c.27-.28.35-.67.24-1.02-.37-1.11-.56-2.3-.56-3.53 0-.54-.45-.99-.99-.99H4.19C3.65 3 3 3.24 3 3.99 3 13.28 10.73 21 20.01 21c.71 0 .99-.63.99-1.18v-3.45c0-.54-.45-.99-.99-.99z"
                  />
                  <path d="M20.2 3.9L14 10M13.7 6.3V10.2H17.8" fill="none" stroke="#e9033b" strokeWidth={1.9} strokeLinecap="round" strokeLinejoin="round" />
                </svg>
              </CallBadge>
              <CallText>
                <CallTitle>Missed voice call</CallTitle>
                Tap to call back
              </CallText>
              <CallTime>11:15</CallTime>
            </CallCard>
          </Bubble>
          {AFTER_CALL.map((m) => (
            <MessageBubble key={m.text} m={m} />
          ))}
        </Messages>

        <Composer>
          <InputPill>
            <svg width={60} height={60} viewBox="0 0 60 60" fill="none" stroke="currentColor" strokeWidth={6} strokeLinejoin="round">
              <path d="M21 3H39Q57 4 57 22V35Q57 37 55 39L39 55Q37 57 34 57H21Q3 56 3 38V22Q3 4 21 3Z" />
              <path d="M33 57V46Q33 35 44 34H57" />
              <circle cx={19.4} cy={20.3} r={4.6} fill="currentColor" stroke="none" />
              <circle cx={40.3} cy={20.3} r={4.6} fill="currentColor" stroke="none" />
              <path d="M17 34H38L33 44Q20 45 16 35.5Q16 34 17 34Z" fill="currentColor" stroke="none" />
            </svg>
            <Placeholder>
              <Caret />
              Message
            </Placeholder>
            <InputIcon width={38} height={60} viewBox="0 0 38 60" fill="none" stroke="currentColor" strokeWidth={5.6} strokeLinecap="round">
              <path d="M35 15V41.5A15.7 15.7 0 0 1 3.5 41.5V13.5A10.5 10.5 0 0 1 24.5 13.5V39.5A5.2 5.2 0 0 1 14 39.5V15" />
            </InputIcon>
            <InputIcon $gap={96} width={60} height={54} viewBox="0 0 60 54" fill="none" stroke="currentColor" strokeWidth={6} strokeLinejoin="round">
              <path d="M3 9H17.5L23 3H37L42.5 9H57V51H3Z" />
              <circle cx={30} cy={30} r={10.7} />
            </InputIcon>
            <InputIcon $gap={91} width={42} height={60} viewBox="0 0 42 60" fill="none" stroke="currentColor" strokeWidth={6} strokeLinejoin="round">
              <path d="M27 3.5L3.5 36H15.5L13 56.5L38.5 27H24.5Z" />
            </InputIcon>
          </InputPill>
          <MicButton aria-label="Record voice message">
            <svg width={42} height={58} viewBox="0 0 42 58">
              <rect x={12} y={0} width={18} height={36.5} rx={9} fill="#fff" />
              <path d="M3 30Q6 45 21 45T39 30M21 45V55" fill="none" stroke="#fff" strokeWidth={6} strokeLinecap="round" />
            </svg>
          </MicButton>
        </Composer>
      </Chat>

      <NavBar>
        <svg width={36} height={36} viewBox="0 0 36 36" stroke="#999" strokeWidth={3} strokeLinecap="round">
          <path d="M1 1.5H35M1 18H35M1 34.5H35" />
        </svg>
        <svg width={36} height={36} viewBox="0 0 36 36" fill="none" stroke="#999" strokeWidth={3}>
          <rect x={1.5} y={1.5} width={33} height={33} rx={7} />
        </svg>
        <svg width={36} height={36} viewBox="1 0 36 36" fill="none" stroke="#999" strokeWidth={2.6} strokeLinejoin="round">
          <path d="M2.500 16L29 2Q33 1 33.5 4.500V31Q33 34.5 29 33.500L2.500 20Q1.500 18 2.500 16Z" />
        </svg>
      </NavBar>
    </Screen>
  );
}
